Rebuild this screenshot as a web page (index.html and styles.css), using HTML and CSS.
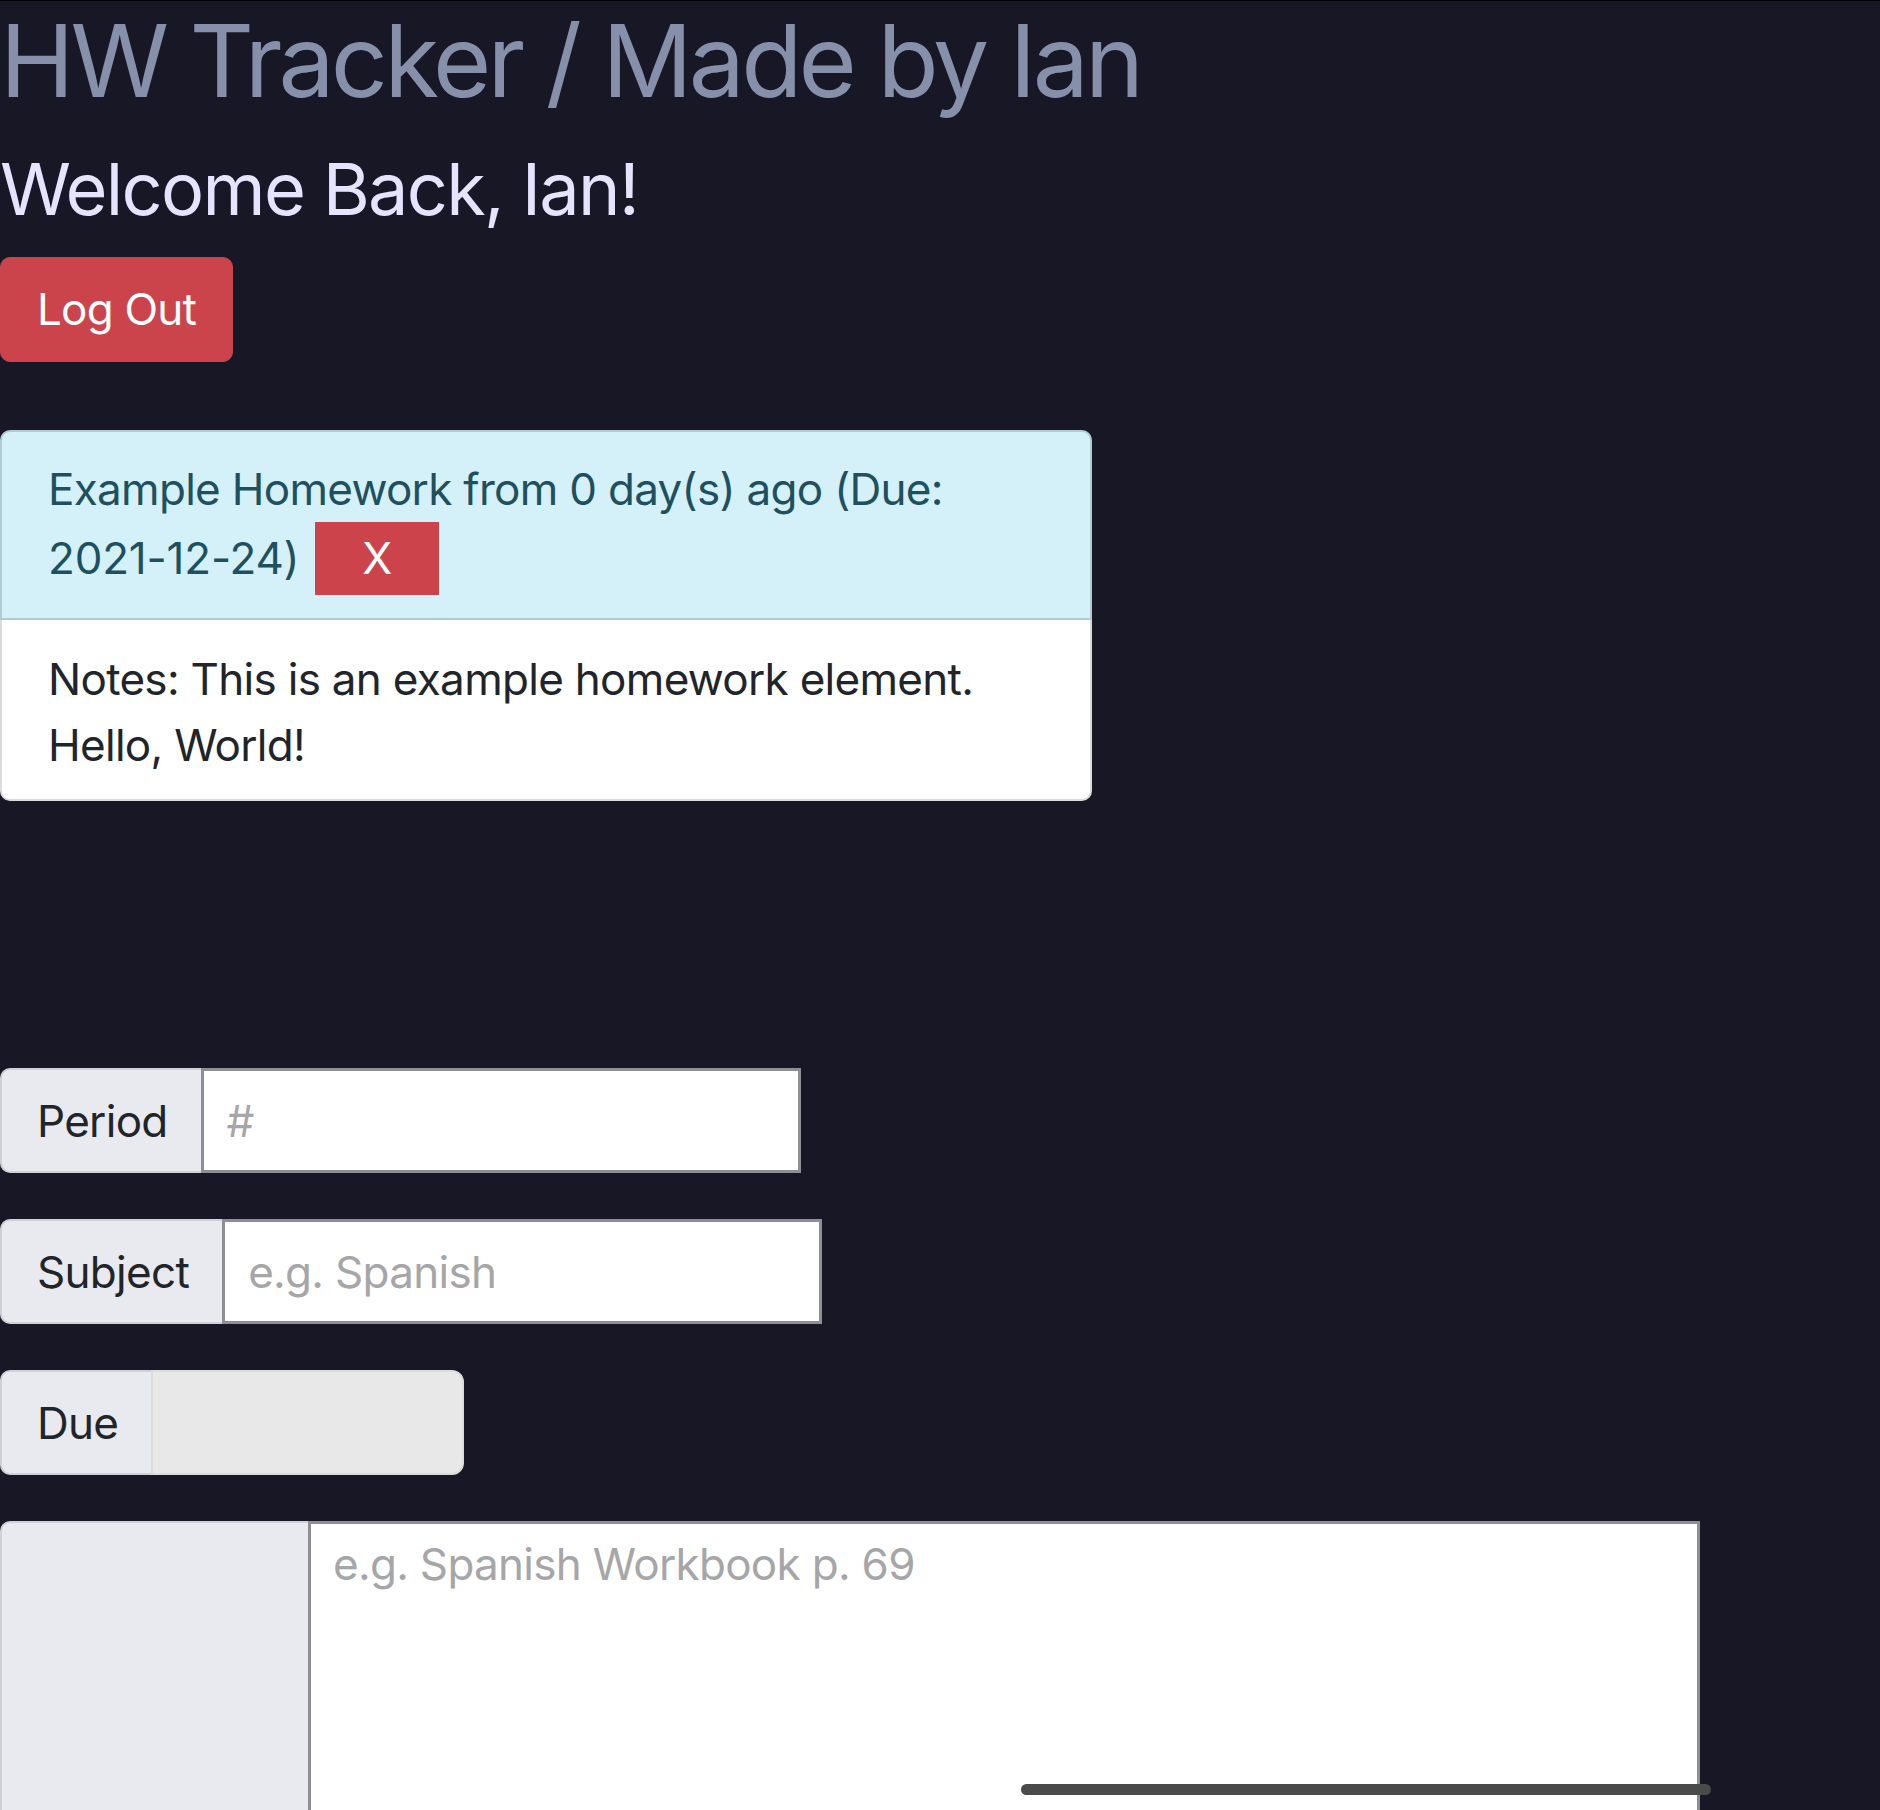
FILE: index.html
```html
<!DOCTYPE html>
<html lang="en">
<head>
<meta charset="utf-8">
<title>HW Tracker</title>
<link rel="stylesheet" href="styles.css">
</head>
<body>
<div class="page">
  <h1 class="title">HW Tracker / Made by Ian</h1>
  <h2 class="welcome">Welcome Back, Ian!</h2>
  <button class="btn-logout" type="button">Log Out</button>

  <div class="hw-card">
    <div class="hw-card-header"><span class="hw-title">Example Homework from 0 day(s) ago (Due: <span class="hw-date">2021-12-24)</span></span> <button class="btn-x" type="button">X</button></div>
    <div class="hw-card-body">Notes: This is an example homework element. Hello, World!</div>
  </div>

  <form class="hw-form">
    <div class="input-group ig-period">
      <span class="ig-label">Period</span>
      <input class="ig-input" type="text" placeholder="#">
    </div>
    <div class="input-group ig-subject">
      <span class="ig-label">Subject</span>
      <input class="ig-input" type="text" placeholder="e.g. Spanish">
    </div>
    <div class="input-group ig-due">
      <span class="ig-label">Due</span>
      <span class="ig-date"></span>
    </div>
    <div class="input-group ig-area">
      <span class="ig-label ig-label-area"></span>
      <textarea class="ig-textarea" placeholder="e.g. Spanish Workbook p. 69"></textarea>
    </div>
  </form>
</div>
<div class="scroll-indicator"></div>
</body>
</html>
```

FILE: styles.css
```css
html, body {
  margin: 0;
  padding: 0;
}
body {
  background: #181726;
  border-top: 1px solid #000;
  font-family: Inter, "Noto Sans", "Liberation Sans", sans-serif;
  overflow: hidden;
  height: 1809px;
}
.page {
  display: flex;
  flex-direction: column;
  align-items: flex-start;
}
.title {
  margin: 0;
  font-size: 100px;
  line-height: 120px;
  font-weight: 400;
  color: #8790aa;
  letter-spacing: -3.8px;
}
.welcome {
  margin: 25px 0 0;
  font-size: 72px;
  line-height: 86px;
  font-weight: 400;
  color: #e5e3ff;
  letter-spacing: -1.7px;
}
.btn-logout {
  margin-top: 25px;
  font-family: inherit;
  font-size: 44px;
  line-height: 65px;
  letter-spacing: -0.8px;
  padding: 19px 36px;
  border: 1px solid #cc444b;
  border-radius: 10px;
  background: #cc444b;
  color: #fff;
}
.hw-card {
  margin-top: 68px;
  width: 1092px;
  font-size: 44px;
  line-height: 66px;
  letter-spacing: -0.7px;
}
.hw-card-header {
  background: #d4f1f9;
  color: #1f5060;
  padding: 24px 46px 23px;
  border: 2px solid rgba(0, 0, 0, 0.16);
  border-radius: 10px 10px 0 0;
}
.hw-date {
  letter-spacing: -0.2px;
}
.btn-x {
  margin-left: 4px;
  font-family: inherit;
  font-size: 44px;
  line-height: 66px;
  padding: 3px 47px 4px;
  border: 0;
  background: #cc434b;
  color: #fff;
  vertical-align: baseline;
}
.hw-card-body {
  background: #fff;
  color: #212529;
  padding: 26px 46px 21px;
  border: 2px solid rgba(0, 0, 0, 0.14);
  border-top: 0;
  border-radius: 0 0 10px 10px;
}
.hw-form {
  margin-top: 267px;
  display: flex;
  flex-direction: column;
  gap: 46px;
}
.input-group {
  display: flex;
  height: 105px;
  font-size: 44px;
  letter-spacing: -0.7px;
}
.ig-label {
  display: flex;
  align-items: center;
  padding: 0 33px 0 35px;
  background: #e9eaef;
  color: #212529;
  border: 2px solid #d0d1d6;
  border-right: 0;
  border-radius: 10px 0 0 10px;
}
.ig-input {
  width: 600px;
  box-sizing: border-box;
  border: 3px solid #8e8e93;
  font-family: inherit;
  font-size: 44px;
  letter-spacing: -0.7px;
  padding: 0 23px;
  background: #fff;
  outline: none;
}
.ig-input::placeholder,
.ig-textarea::placeholder {
  color: #a6a6a8;
}
.ig-date {
  width: 313px;
  box-sizing: border-box;
  background: #e8e8e8;
  border: 2px solid #dcdcdc;
  border-radius: 0 12px 12px 0;
}
.ig-area {
  height: 420px;
}
.ig-label-area {
  width: 237px;
  padding: 0 34px 0 35px;
  border-bottom: 0;
  border-radius: 10px 0 0 0;
}
.ig-textarea {
  width: 1392px;
  box-sizing: border-box;
  border: 3px solid #8e8e93;
  border-bottom: 0;
  font-family: inherit;
  font-size: 44px;
  letter-spacing: -0.7px;
  line-height: 66px;
  padding: 7px 22px;
  resize: none;
  background: #fff;
  outline: none;
}
.scroll-indicator {
  position: fixed;
  left: 1021px;
  top: 1784px;
  width: 690px;
  height: 11px;
  border-radius: 6px;
  background: #4a4a4a;
}
```
